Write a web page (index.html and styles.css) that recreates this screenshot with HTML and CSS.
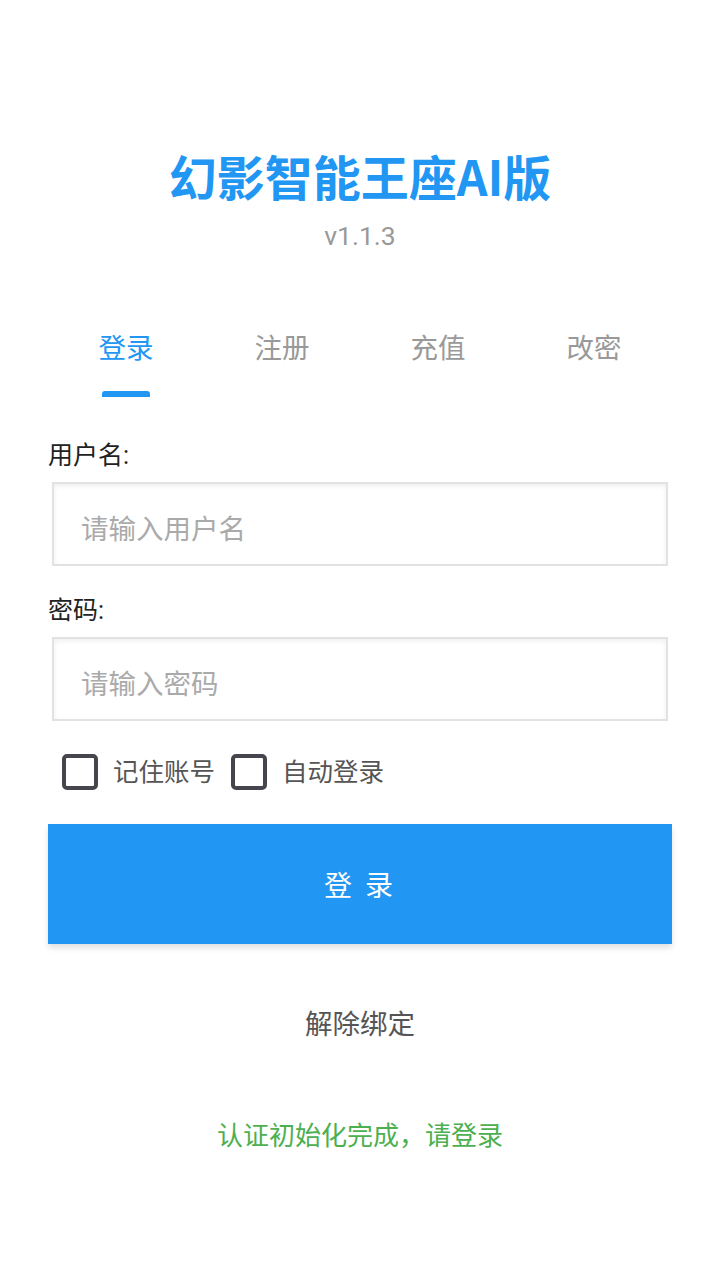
FILE: index.html
```html
<!DOCTYPE html>
<html lang="zh-CN">
<head>
<meta charset="utf-8">
<title>幻影智能王座AI版</title>
<link rel="stylesheet" href="styles.css">
</head>
<body>
<div class="page">
  <header class="header">
    <h1 class="title">幻影智能王座AI版</h1>
    <div class="version">v1.1.3</div>
  </header>

  <nav class="tabs">
    <div class="tab active"><span class="tab-text">登录</span><span class="tab-bar"></span></div>
    <div class="tab"><span class="tab-text">注册</span><span class="tab-bar"></span></div>
    <div class="tab"><span class="tab-text">充值</span><span class="tab-bar"></span></div>
    <div class="tab"><span class="tab-text">改密</span><span class="tab-bar"></span></div>
  </nav>

  <form class="form">
    <label class="label">用户名:</label>
    <input class="field" type="text" placeholder="请输入用户名">
    <label class="label label-second">密码:</label>
    <input class="field" type="password" placeholder="请输入密码">

    <div class="checks">
      <span class="check"><span class="box"></span><span class="check-text">记住账号</span></span>
      <span class="check"><span class="box"></span><span class="check-text">自动登录</span></span>
    </div>

    <button class="btn" type="button">登 录</button>
  </form>

  <div class="unbind">解除绑定</div>
  <div class="status">认证初始化完成，请登录</div>
</div>
</body>
</html>
```

FILE: styles.css
```css
* { box-sizing: border-box; }

html, body {
  margin: 0;
  padding: 0;
  background: #ffffff;
}

body {
  font-family: Roboto, "Noto Sans CJK SC", "Noto Sans", sans-serif;
  width: 720px;
  height: 1280px;
  overflow: hidden;
}

.page {
  padding: 0 48px;
}

.header {
  padding-top: 145px;
  text-align: center;
}

.title {
  margin: 0;
  font-size: 48px;
  line-height: 60px;
  font-weight: 700;
  color: #2196f3;
  font-family: "Noto Sans CJK SC", Roboto, sans-serif;
}

.version {
  margin-top: 15px;
  font-size: 26.5px;
  line-height: 32px;
  color: #999999;
}

.tabs {
  margin-top: 68px;
  display: grid;
  grid-template-columns: repeat(4, 1fr);
}

.tab {
  height: 77px;
  display: flex;
  flex-direction: column;
  align-items: center;
}

.tab-text {
  font-size: 27.5px;
  line-height: 58px;
  color: #999999;
}

.tab-bar {
  margin-top: 13px;
  width: 48px;
  height: 6px;
  border-radius: 3px 3px 0 0;
  background: transparent;
}

.tab.active .tab-text { color: #2196f3; }
.tab.active .tab-bar { background: #2196f3; }

.form {
  margin: 42px 0 0;
  display: flex;
  flex-direction: column;
}

.label {
  font-size: 25px;
  line-height: 34px;
  color: #222222;
}

.label-second {
  margin-top: 28px;
}

.field {
  margin: 9px 4px 0;
  height: 84px;
  border: 2px solid #e2e2e2;
  border-radius: 0;
  box-shadow: inset 0 2px 5px rgba(0, 0, 0, 0.07);
  padding: 10px 0 0 27px;
  font-family: inherit;
  font-size: 27.5px;
  color: #333333;
  background: #ffffff;
  outline: none;
}

.field::placeholder {
  color: #aaaaaa;
}

.checks {
  margin-top: 33px;
  padding-left: 14px;
  display: flex;
  align-items: center;
  height: 36px;
  gap: 16px;
}

.check {
  display: flex;
  align-items: center;
  gap: 15px;
}

.box {
  width: 36px;
  height: 36px;
  border: 4px solid #46444c;
  border-radius: 5px;
}

.check-text {
  font-size: 25.5px;
  line-height: 36px;
  color: #555555;
}

.btn {
  margin-top: 34px;
  height: 120px;
  border: none;
  border-radius: 0;
  background: #2196f3;
  color: #ffffff;
  font-family: inherit;
  font-size: 28px;
  letter-spacing: 3px;
  box-shadow: 0 4px 6px rgba(0, 0, 0, 0.12);
}

.unbind {
  margin-top: 61px;
  text-align: center;
  font-size: 27.5px;
  line-height: 40px;
  color: #555555;
}

.status {
  margin-top: 71px;
  text-align: center;
  font-size: 26px;
  line-height: 40px;
  color: #4caf50;
}
```
